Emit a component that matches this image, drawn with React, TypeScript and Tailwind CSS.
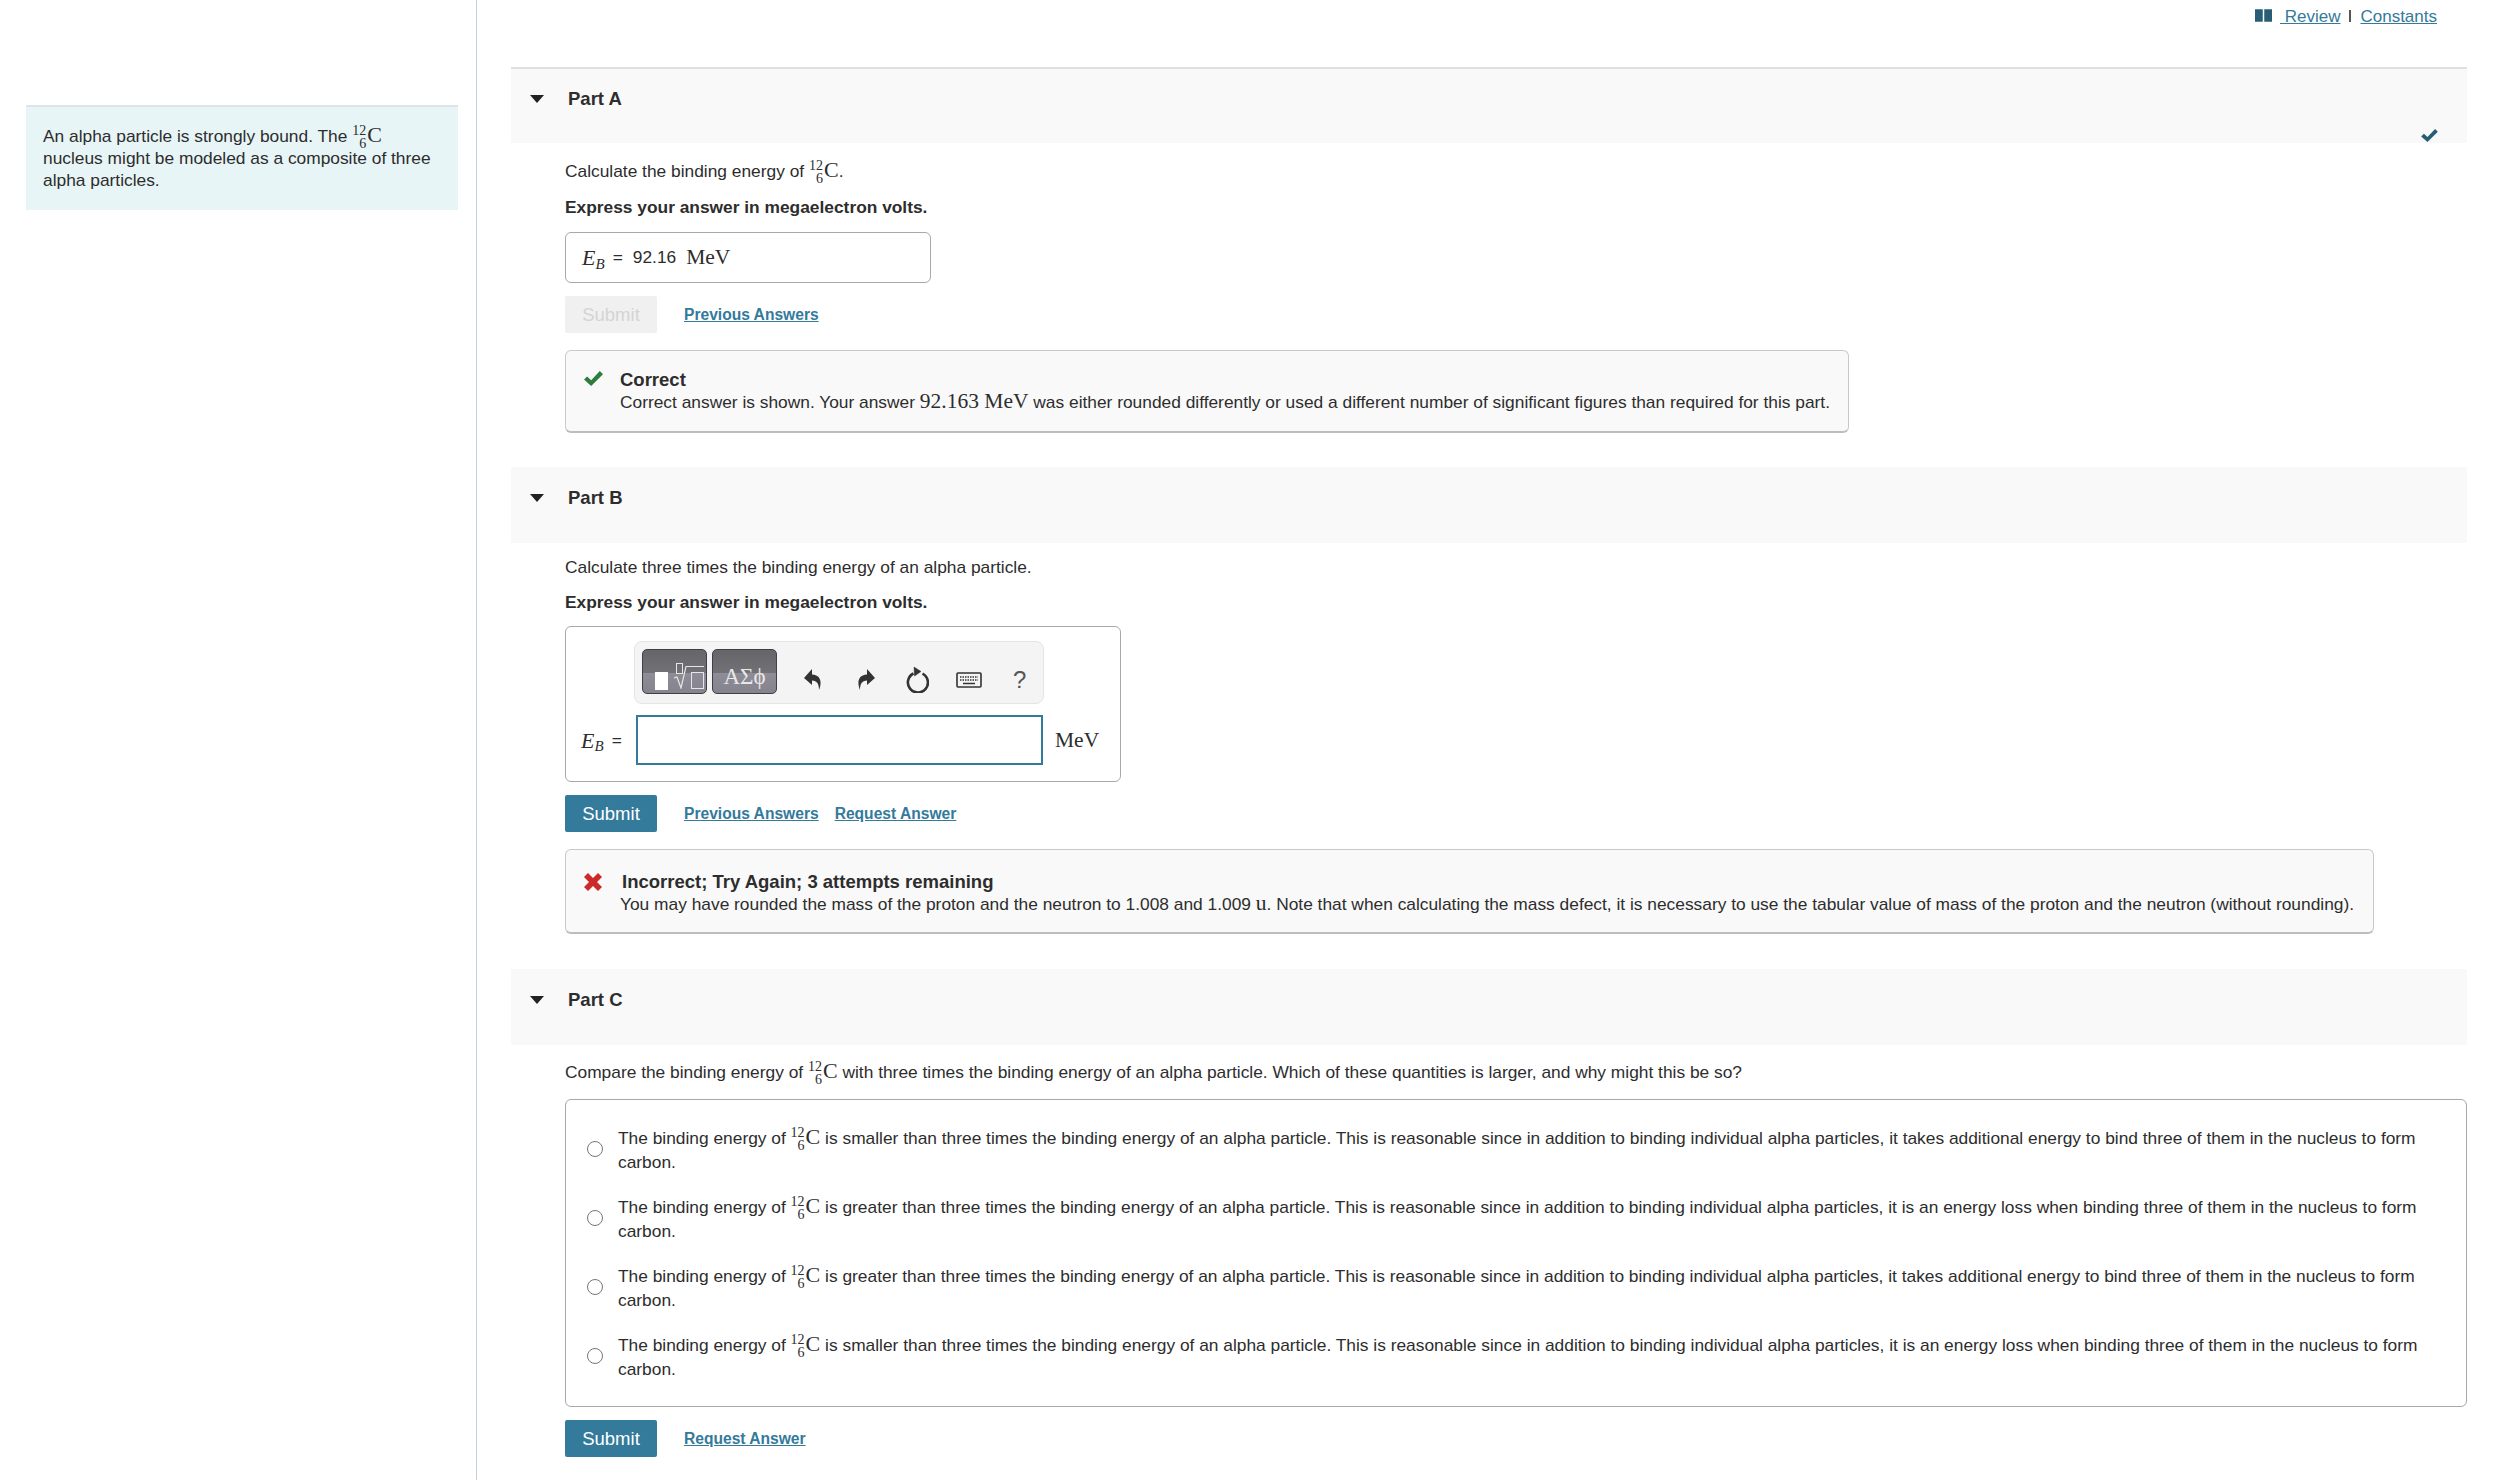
import type { ReactNode } from "react";

const MATH = "font-['Liberation_Serif',serif]";
const choices = [
  "is smaller than three times the binding energy of an alpha particle. This is reasonable since in addition to binding individual alpha particles, it takes additional energy to bind three of them in the nucleus to form carbon.",
  "is greater than three times the binding energy of an alpha particle. This is reasonable since in addition to binding individual alpha particles, it is an energy loss when binding three of them in the nucleus to form carbon.",
  "is greater than three times the binding energy of an alpha particle. This is reasonable since in addition to binding individual alpha particles, it takes additional energy to bind three of them in the nucleus to form carbon.",
  "is smaller than three times the binding energy of an alpha particle. This is reasonable since in addition to binding individual alpha particles, it is an energy loss when binding three of them in the nucleus to form carbon.",
];

function Carbon() {
  return (
    <span className={`${MATH} inline-flex items-baseline`}>
      <span className="relative inline-block w-[14px] h-[1px]">
        <span className="absolute right-0 -top-[16px] text-[14px] leading-[12px]">12</span>
        <span className="absolute right-0 -top-[3px] text-[14px] leading-[12px]">6</span>
      </span>
      <span className="text-[22px] leading-none ml-[1px]">C</span>
    </span>
  );
}

function Check({ className }: { className: string }) {
  return (
    <svg viewBox="0 0 18 14" className={className}>
      <path d="M0 8 3 5l3.8 3.6L15 0l3 3L6.8 14z" />
    </svg>
  );
}

function PartHeader({ title, check }: { title: string; check?: boolean }) {
  return (
    <div className={`relative h-[76px] bg-[#f9f9f9] flex items-start pl-[19px] ${check ? "border-t-2 border-[#e0e0e0] pt-[19px]" : "pt-[20px]"}`}>
      <span className="mt-[7px] w-0 h-0 border-x-[7px] border-x-transparent border-t-[8px] border-t-[#222]" />
      <h2 className="ml-[24px] text-[18.5px] leading-[22px] font-bold text-[#2d2d2d]">{title}</h2>
      {check && <Check className="absolute right-[29px] bottom-[1px] w-[17px] h-[13px] fill-[#275d75]" />}
    </div>
  );
}

function Submit({ disabled }: { disabled?: boolean }) {
  return (
    <button className={`w-[92px] h-[37px] rounded-[2px] text-[18.5px] ${disabled ? "bg-[#f0f0f0] text-[#d4d4d4]" : "bg-[#337a9b] text-white"}`}>
      Submit
    </button>
  );
}

function TextLink({ children }: { children: ReactNode }) {
  return <a className="text-[15.6px] font-bold text-[#337a9b] underline">{children}</a>;
}

function Feedback({ icon, title, children, className }: { icon: ReactNode; title: ReactNode; children: ReactNode; className: string }) {
  return (
    <div className={`${className} mt-[17px] rounded-[6px] border border-[#c9c9c9] border-b-2 border-b-[#bdbdbd] bg-[#f9f9f9] pl-[18px] flex text-[#2d2d2d]`}>
      <div className="w-[36px] shrink-0 pt-[2px]">{icon}</div>
      <div>
        <div className="text-[18.5px] leading-[22px] font-bold">{title}</div>
        <div className="text-[17.35px] leading-[22px] whitespace-nowrap">{children}</div>
      </div>
    </div>
  );
}

function MathKey({ children }: { children: ReactNode }) {
  return (
    <div className="relative w-[65px] h-[45px] -mt-[2px] rounded-[5px] border border-[#3f3f45] bg-[linear-gradient(#66666a_0%,#727276_53%,#8e8c96_54%,#85838d_100%)] overflow-hidden">
      {children}
    </div>
  );
}

function Toolbar() {
  return (
    <div className="ml-[68px] w-[410px] h-[63px] rounded-[8px] border border-[#e4e4e4] bg-[#f4f4f4] flex items-center pl-[7px]">
      <MathKey>
        <span className="absolute left-[12px] top-[22px] w-[13px] h-[18px] bg-white" />
        <svg viewBox="0 0 30 26" className="absolute left-[31px] top-[13px] w-[30px] h-[26px] fill-none stroke-[#e6e6e6]">
          <rect x="2.5" y="0.5" width="6" height="10" />
          <path d="M0 15 3 14 7 25 12 3.5H30" strokeWidth="1.2" />
          <rect x="17.5" y="9.5" width="12" height="16" />
        </svg>
      </MathKey>
      <div className="ml-[5px]">
        <MathKey>
          <div className={`${MATH} text-[23px] leading-[54px] text-center text-[#e8e8e8]`}>ΑΣϕ</div>
        </MathKey>
      </div>
      <svg viewBox="0 0 18 22" className="ml-[27px] mt-[14px] w-[18px] h-[22px] fill-[#333]">
        <path d="M8 0 0 9l8 7v-4.500c5 0 7 3.500 7 9.500 2-4 4-15-7-15.500z" />
      </svg>
      <svg viewBox="0 0 18 22" className="ml-[35px] mt-[14px] w-[18px] h-[22px] fill-[#333] -scale-x-100">
        <path d="M8 0 0 9l8 7v-4.500c5 0 7 3.500 7 9.500 2-4 4-15-7-15.500z" />
      </svg>
      <svg viewBox="0 0 24 27" className="ml-[30px] mt-[14px] w-[24px] h-[27px] fill-[#333] stroke-[#333]">
        <path d="M8.500 7.500A10 10 0 1 0 17.500 7.600" fill="none" strokeWidth="2.600" />
        <path d="M9 1 16 5.500 9.500 10z" strokeWidth="0.5" />
      </svg>
      <svg viewBox="0 0 26 16" className="ml-[27px] mt-[14px] w-[26px] h-[16px] fill-none stroke-[#333]">
        <rect x="1" y="1" width="24" height="14" rx="1" strokeWidth="1.600" />
        <path d="M4 5h18M4 8h18" strokeWidth="1.500" strokeDasharray="1.500 1" />
        <path d="M7 11.500h12" strokeWidth="1.500" />
      </svg>
      <span className="ml-[31px] mt-[14px] text-[24px] text-[#555] leading-none">?</span>
    </div>
  );
}

export default function App() {
  return (
    <div className="flex w-full h-[1480px] overflow-hidden bg-white font-['Liberation_Sans',Arial,sans-serif] text-[#2d2d2d]">
      <aside className="w-[477px] shrink-0 border-r border-[#c5cfdc] pl-[26px] pr-[18px] pt-[105px]">
        <div className="h-[105px] border-t-2 border-[#dbe6e6] bg-[#e8f5f7] pl-[17px] pr-[20px] pt-[17px] text-[17.35px] leading-[22px]">
          An alpha particle is strongly bound. The <Carbon /> nucleus might be modeled as a composite of three alpha particles.
        </div>
      </aside>

      <main className="flex-1 min-w-0 pl-[34px] pr-[41px]">
        <div className="h-[67px] pt-[7px] flex justify-end items-start pr-[30px] text-[17px] leading-[20px]">
          <svg viewBox="0 0 18 13" className="mt-[2px] w-[17px] h-[13px] fill-[#275d75]">
            <path d="M0 0h8.200v13H0zM9.800 0H18v13H9.800z" />
          </svg>
          <a className="ml-[8px] text-[#337a9b] underline">&nbsp;Review</a>
          <span className="ml-[9px] mr-[9px] mt-[3px] w-[2px] h-[12px] bg-[#555]" />
          <a className="text-[#337a9b] underline">Constants</a>
        </div>

        <section>
          <PartHeader title="Part A" check />
          <div className="pl-[54px] pt-[16px]">
            <p className="text-[17.35px] leading-[24px]">Calculate the binding energy of <Carbon />.</p>
            <p className="mt-[12px] text-[17.35px] leading-[24px] font-bold">Express your answer in megaelectron volts.</p>
            <div className="mt-[13px] w-[366px] h-[51px] rounded-[6px] border border-[#a8a8a8] flex items-center pl-[16px] text-[17.35px]">
              <span className={`${MATH} text-[22px] italic`}>E<sub className="text-[15px]">B</sub></span>
              <span className="ml-[8px]">=</span>
              <span className="ml-[10px]">92.16</span>
              <span className={`${MATH} ml-[10px] text-[21.500px]`}>MeV</span>
            </div>
            <div className="mt-[13px] flex items-center gap-[27px]">
              <Submit disabled />
              <TextLink>Previous Answers</TextLink>
            </div>
            <Feedback
              className="w-[1284px] pt-[18px] pb-[18px]"
              title="Correct"
              icon={<Check className="w-[19px] h-[15px] fill-[#2e7d3c]" />}
            >
              Correct answer is shown. Your answer <span className={`${MATH} text-[21.500px] leading-none`}>92.163 MeV</span> was either rounded differently or used a different number of significant figures than required for this part.
            </Feedback>
          </div>
        </section>

        <section className="mt-[34px]">
          <PartHeader title="Part B" />
          <div className="pl-[54px] pt-[12px]">
            <p className="text-[17.35px] leading-[24px]">Calculate three times the binding energy of an alpha particle.</p>
            <p className="mt-[11px] text-[17.35px] leading-[24px] font-bold">Express your answer in megaelectron volts.</p>
            <div className="mt-[12px] w-[556px] h-[156px] rounded-[6px] border border-[#a8a8a8] pt-[14px]">
              <Toolbar />
              <div className="mt-[11px] flex items-center pl-[15px]">
                <div className="w-[55px] shrink-0 flex items-center">
                  <span className={`${MATH} text-[22px] italic`}>E<sub className="text-[15px]">B</sub></span>
                  <span className="ml-[8px] text-[17.35px]">=</span>
                </div>
                <div className="w-[407px] h-[50px] border-2 border-[#337a9b]" />
                <span className={`${MATH} ml-[12px] text-[21.500px]`}>MeV</span>
              </div>
            </div>
            <div className="mt-[13px] flex items-center">
              <Submit />
              <span className="ml-[27px]"><TextLink>Previous Answers</TextLink></span>
              <span className="ml-[16px]"><TextLink>Request Answer</TextLink></span>
            </div>
            <Feedback
              className="w-[1809px] pt-[21px] pb-[17px]"
              title={<span className="ml-[2px]">Incorrect; Try Again; 3 attempts remaining</span>}
              icon={
                <svg viewBox="0 0 18 18" className="w-[18px] h-[18px] fill-[#cc2a2a]">
                  <path d="M4 0 9 5 14 0l4 4-5 5 5 5-4 4-5-5-5 5-4-4 5-5-5-5z" />
                </svg>
              }
            >
              You may have rounded the mass of the proton and the neutron to 1.008 and 1.009 <span className={`${MATH} text-[21.500px] leading-none`}>u</span>. Note that when calculating the mass defect, it is necessary to use the tabular value of mass of the proton and the neutron (without rounding).
            </Feedback>
          </div>
        </section>

        <section className="mt-[35px]">
          <PartHeader title="Part C" />
          <div className="pl-[54px] pt-[15px]">
            <p className="text-[17.35px] leading-[24px]">
              Compare the binding energy of <Carbon /> with three times the binding energy of an alpha particle. Which of these quantities is larger, and why might this be so?
            </p>
            <div className="mt-[15px] h-[308px] rounded-[6px] border border-[#a8a8a8] pl-[21px] pr-[30px] pt-[26px] flex flex-col gap-[21px]">
              {choices.map((text, i) => (
                <label key={i} className="flex items-center text-[17.35px] leading-[24px]">
                  <span className="-mt-[2px] w-[16px] h-[16px] shrink-0 rounded-full border border-[#767676] bg-white" />
                  <span className="ml-[15px]">The binding energy of <Carbon /> {text}</span>
                </label>
              ))}
            </div>
            <div className="mt-[13px] flex items-center">
              <Submit />
              <span className="ml-[27px]"><TextLink>Request Answer</TextLink></span>
            </div>
          </div>
        </section>
      </main>
    </div>
  );
}
